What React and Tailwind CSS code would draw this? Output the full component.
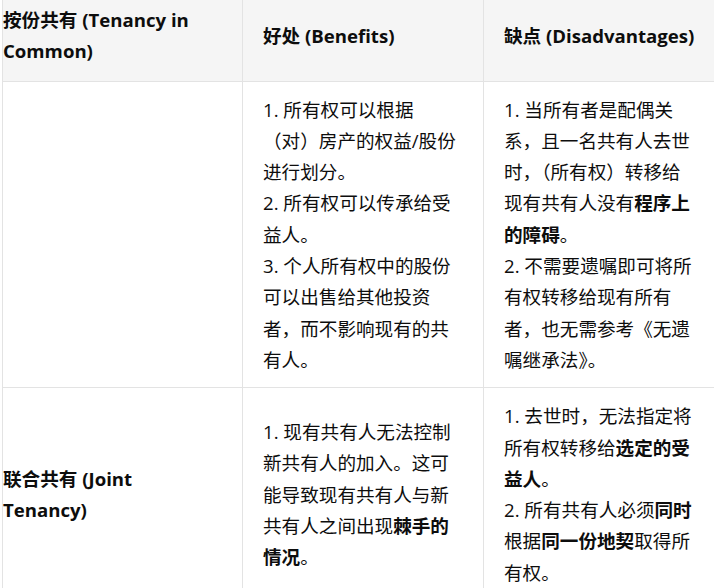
import React from "react";

const B = ({ children }) => <strong className="font-bold">{children}</strong>;

export default function App() {
  const font = { fontFamily: '"Open Sans", "Noto Sans CJK SC", sans-serif' };
  return (
    <div className="w-[714px] h-[588px] overflow-hidden bg-white" style={font}>
      <table className="-mt-[9px] ml-[2px] w-[722px] table-fixed border-collapse text-[18.6px] leading-[31.3px] text-[#0d0d0d]">
        <colgroup>
          <col className="w-[240px]" />
          <col className="w-[241px]" />
          <col className="w-[241px]" />
        </colgroup>
        <thead>
          <tr className="bg-[#f5f5f5]">
            <th className="border border-[#e3e3e3] pl-0 pr-[20px] pt-[12px] pb-[14px] text-left align-middle font-bold whitespace-nowrap">
              按份共有 (Tenancy in<br />Common)
            </th>
            <th className="border border-[#e3e3e3] px-[20px] pt-[12px] pb-[14px] text-left align-middle font-bold whitespace-nowrap">
              好处 (Benefits)
            </th>
            <th className="border border-[#e3e3e3] px-[20px] pt-[12px] pb-[14px] text-left align-middle font-bold whitespace-nowrap">
              缺点 (Disadvantages)
            </th>
          </tr>
        </thead>
        <tbody>
          <tr>
            <td className="border border-[#e3e3e3] pl-0 pr-[20px] py-[12px] align-middle"></td>
            <td className="border border-[#e3e3e3] px-[20px] py-[12px] align-middle whitespace-nowrap">
              1. 所有权可以根据<br />
              （对）房产的权益/股份<br />
              进行划分。<br />
              2. 所有权可以传承给受<br />
              益人。<br />
              3. 个人所有权中的股份<br />
              可以出售给其他投资<br />
              者，而不影响现有的共<br />
              有人。
            </td>
            <td className="border border-[#e3e3e3] px-[20px] py-[12px] align-middle whitespace-nowrap">
              1. 当所有者是配偶关<br />
              系，且一名共有人去世<br />
              时，（所有权）转移给<br />
              现有共有人没有<B>程序上</B><br />
              <B>的障碍</B>。<br />
              2. 不需要遗嘱即可将所<br />
              有权转移给现有所有<br />
              者，也无需参考《无遗<br />
              嘱继承法》。
            </td>
          </tr>
          <tr>
            <td className="border border-[#e3e3e3] pl-0 pr-[20px] py-[12px] align-middle font-bold whitespace-nowrap">
              联合共有 (Joint<br />Tenancy)
            </td>
            <td className="border border-[#e3e3e3] px-[20px] py-[12px] align-middle whitespace-nowrap">
              1. 现有共有人无法控制<br />
              新共有人的加入。这可<br />
              能导致现有共有人与新<br />
              共有人之间出现<B>棘手的</B><br />
              <B>情况</B>。
            </td>
            <td className="border border-[#e3e3e3] px-[20px] py-[12px] align-middle whitespace-nowrap">
              1. 去世时，无法指定将<br />
              所有权转移给<B>选定的受</B><br />
              <B>益人</B>。<br />
              2. 所有共有人必须<B>同时</B><br />
              根据<B>同一份地契</B>取得所<br />
              有权。
            </td>
          </tr>
        </tbody>
      </table>
    </div>
  );
}
